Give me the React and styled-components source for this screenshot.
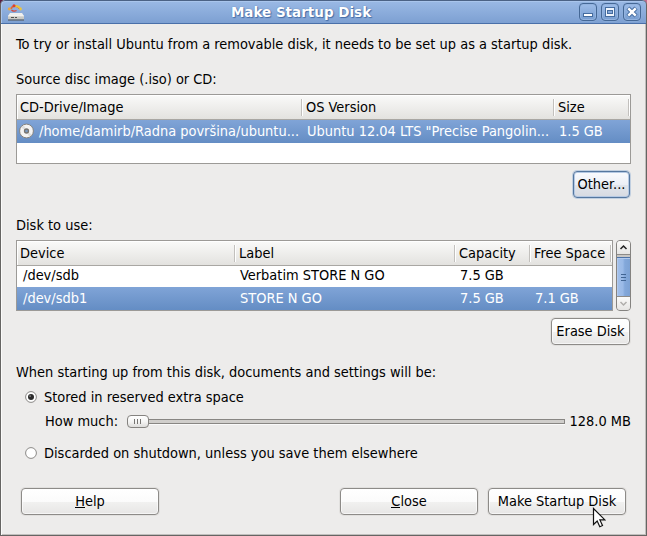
import React from "react";
import styled, { createGlobalStyle, css } from "styled-components";

const Global = createGlobalStyle`
  * { box-sizing: border-box; }
  html, body { margin: 0; padding: 0; overflow: hidden; }
  body {
    width: 647px;
    height: 536px;
    background: linear-gradient(90deg, #5c1f45 50%, #c06a90 50%);
    font-family: "DejaVu Sans Condensed", "DejaVu Sans", sans-serif;
    font-stretch: condensed;
    font-size: 14.45px;
    color: #000;
    cursor: default;
  }
`;

const Window = styled.main`
  position: relative;
  width: 647px;
  height: 536px;
  display: flex;
  flex-direction: column;
  border: 1px solid #666563;
  border-top: 0;
  border-radius: 5px 5px 0 0;
  background: #edeceb;
  box-shadow: inset 1px 0 #fbfbfa, inset -1px -1px #c1bfbd;
  overflow: hidden;
`;

const TitleBar = styled.header`
  height: 24px;
  flex: none;
  margin: 0 -1px;
  padding: 0 5px 0 6px;
  display: grid;
  grid-template-columns: 30px 1fr 76px;
  align-items: center;
  border: 1px solid #4b6285;
  border-bottom-color: #4a70a9;
  border-radius: 5px 5px 0 0;
  background: linear-gradient(#9ab9e5, #7da0d2);
  box-shadow: inset 1px 1px #a9c5ec;
`;

const Title = styled.h1`
  margin: 0;
  text-align: center;
  font-family: "DejaVu Sans", sans-serif;
  font-stretch: normal;
  font-size: 13.5px;
  line-height: 22px;
  font-weight: bold;
  color: #fff;
  text-shadow: 0 0 1px #456da6, 1px 1px 1px #456da6;
`;

const WindowControls = styled.div`
  display: flex;
  justify-content: flex-end;
  gap: 4px;
`;

const ControlButton = styled.button`
  width: 18px;
  height: 18px;
  padding: 0;
  display: grid;
  place-items: center;
  border: 1px solid #456896;
  border-radius: 4px;
  background: linear-gradient(#9dbce8, #779dd0);
  box-shadow: inset 0 0 0 1px #93b3df, 0 0 0 0.5px #8eafdc;
  svg { display: block; }
`;

const Body = styled.div`
  padding: 12px 15px 0;
  display: flex;
  flex-direction: column;
`;

const Line = styled.div`
  height: 16px;
  line-height: 16px;
  white-space: nowrap;
  margin: ${(p) => p.$top || 0}px 0 ${(p) => p.$bottom || 0}px;
`;

const TableRow = styled.div`
  display: grid;
`;

const Table = styled.div`
  height: ${(p) => p.$height}px;
  flex: none;
  width: ${(p) => p.$width}px;
  border: 1px solid #9c9a97;
  background: #fff;
  overflow: hidden;
  ${TableRow} { grid-template-columns: ${(p) => p.$columns}; }
`;

const HeadRow = styled(TableRow)`
  height: 25px;
  padding: 4px 0 3px;
  border-bottom: 1px solid #a9a7a3;
  background: linear-gradient(#fafaf9, #e3e2df);
  box-shadow: inset 1px 1px #fff;
`;

const HeadCell = styled.div`
  padding-left: 3px;
  line-height: 16px;
  white-space: nowrap;
  border-right: 1px solid #c2c0bd;
  box-shadow: 1px 0 #fff;
  & + & { padding-left: 4px; }
`;

const DataRow = styled(TableRow)`
  height: ${(p) => p.$height || 23}px;
  line-height: ${(p) => p.$line || 22}px;
  align-items: start;
  ${(p) =>
    p.$selected &&
    css`
      color: #fff;
      background: linear-gradient(#80a4d7, #648dc4);
    `}
`;

const Cell = styled.div`
  display: flex;
  align-items: center;
  gap: 5px;
  padding-left: ${(p) => p.$pad ?? 5}px;
  white-space: nowrap;
  svg { flex: none; }
`;

const Button = styled.button`
  width: ${(p) => p.$width}px;
  height: 27px;
  padding: 0 0 1px;
  font: inherit;
  line-height: 16px;
  color: #000;
  white-space: nowrap;
  border: 1px solid #8d8b88;
  border-radius: 4px;
  background: linear-gradient(#ffffff, #fbfbfb 50%, #f1f1f0 52%, #e7e6e5);
  box-shadow: inset 0 0 0 1px rgba(255, 255, 255, 0.6), 0 0 0 1px rgba(190, 188, 185, 0.25);
  ${(p) =>
    p.$focused &&
    css`
      border-color: #55779f;
      background: linear-gradient(#fafbfe, #eceff6 50%, #e1e5ec 52%, #d7dae1);
      box-shadow: inset 0 0 0 1px #b5c9e4, 0 0 0 1px rgba(150, 178, 214, 0.5);
    `}
`;

const Accel = styled.span`
  border-bottom: 1px solid #000;
  display: inline-block;
  height: 15px;
`;

const RightAligned = styled.div`
  display: flex;
  justify-content: flex-end;
  margin: 7px 1px 0 0;
`;

const DiskArea = styled.div`
  display: flex;
  gap: 3px;
`;

const ScrollBar = styled.div`
  width: 15px;
  height: 71px;
  display: flex;
  flex-direction: column;
  border: 1px solid #858380;
  border-radius: 4px;
  background: #c9c7c4;
  overflow: hidden;
`;

const ScrollStep = styled.div`
  height: 14px;
  flex: none;
  display: grid;
  place-items: center;
  background: linear-gradient(#fbfbfa, #e6e5e3);
  ${(p) => (p.$down ? "border-top" : "border-bottom")}: 1px solid #8d8b88;
`;

const ScrollThumb = styled.div`
  height: 39px;
  flex: none;
  margin: 2px -1px 0;
  display: grid;
  place-items: center;
  border: 1px solid #4e73a6;
  border-bottom: 0;
  background: linear-gradient(90deg, #a3c0ea, #9abae7 45%, #83a8da 60%, #7da2d4);
  box-shadow: inset 1px 1px #b2caee;
`;

const Option = styled.label`
  height: 16px;
  display: flex;
  align-items: center;
  margin: ${(p) => p.$top}px 0 0 9px;
  gap: 7px;
  line-height: 16px;
  white-space: nowrap;
`;

const SizeRow = styled.div`
  display: flex;
  align-items: center;
  height: 16px;
  margin: 8px 0 0 29px;
  line-height: 16px;
  white-space: nowrap;
`;

const SizeLabel = styled.span`
  width: 82px;
`;

const SliderTrack = styled.div`
  width: 417px;
  height: 5px;
  flex: none;
  margin: 0 5px 0 20px;
  border: 1px solid #888683;
  border-left: 0;
  background: #d0cecb;
  box-shadow: 0 1px #fafafa;
`;

const SliderThumb = styled.div`
  width: 22px;
  height: 13px;
  flex: none;
  margin-right: -21px;
  z-index: 1;
  display: flex;
  align-items: center;
  justify-content: center;
  gap: 2px;
  border: 1px solid #858380;
  border-radius: 4px;
  background: linear-gradient(#fff, #f5f5f4 50%, #dedddb);
`;

const Grip = styled.i`
  width: 1px;
  height: 5px;
  background: #777572;
`;

const Actions = styled.footer`
  display: flex;
  margin: 27px 0 0 5px;
  gap: 10px;
  ${Button}:first-child { margin-right: 171px; }
`;

const Pointer = styled.svg`
  position: absolute;
  left: 591px;
  top: 507px;
`;

function DiskIcon() {
  return (
    <svg width="18" height="18" viewBox="0 0 18 18" aria-hidden="true">
      <path d="M4 6C5 2.5 10 2 13 6" fill="none" stroke="#df6b3a" strokeWidth="1.8" />
      <path d="M8 3.2q3-.6 5 2" fill="none" stroke="#eac63a" strokeWidth="2" />
      <circle cx="2.3" cy="6" r="1.4" fill="#f0a63c" />
      <circle cx="7" cy="2.8" r="1.5" fill="#db3f32" />
      <circle cx="13.5" cy="6" r="1.4" fill="#ecc540" />
      <path d="M4.5 7q2 2 5 .5" fill="none" stroke="#d84234" strokeWidth="1.3" />
      <path d="M3 10h12l2 3H1z" fill="#efefed" />
      <path d="M1 13h16v3.5H1z" fill="#c9c9c5" />
      <path d="M1 17h16M4 14.5h3m1 0h2" stroke="#4e504e" />
      <path d="M1 13h16" stroke="#f9f9f8" strokeWidth=".6" />
    </svg>
  );
}

function DiscIcon() {
  return (
    <svg width="15" height="16" viewBox="0 0 15 16" aria-hidden="true">
      <circle cx="7.5" cy="8" r="6.9" fill="#f4f4f3" stroke="#85827e" />
      <path d="M7.5 8 2 4.5A6 6 0 0 1 5 2.2zM7.5 8l5.5 3.5a6 6 0 0 1-3 2.3z" fill="#dededc" />
      <circle cx="7.5" cy="8" r="2" fill="#7898c0" stroke="#77746f" strokeWidth="1.3" />
    </svg>
  );
}

function Radio({ checked }) {
  return (
    <svg width="12" height="12" viewBox="0 0 12 12" aria-hidden="true">
      <circle cx="6" cy="6" r="5.4" fill="#fff" stroke="#8b8987" />
      {checked && <circle cx="6" cy="6" r="3" fill="#2b2b2b" />}
      {checked && <circle cx="5.1" cy="5.1" r="0.9" fill="#8a8a8a" />}
    </svg>
  );
}

function Arrow({ down }) {
  return (
    <svg width="9" height="7" viewBox="0 0 9 7" aria-hidden="true">
      <path d={down ? "M1.5 2l3 3 3-3" : "M1.5 5l3-3 3 3"} fill="none" stroke={down ? "#b0aeab" : "#222"} strokeWidth="1.5" />
    </svg>
  );
}

export default function App() {
  return (
    <>
      <Global />
      <Window>
        <TitleBar>
          <DiskIcon />
          <Title>Make Startup Disk</Title>
          <WindowControls>
            <ControlButton aria-label="Minimize">
              <svg width="12" height="12" viewBox="0 0 12 12">
                <rect x="1.5" y="7.5" width="9" height="3" fill="#fff" stroke="#456c9f" />
              </svg>
            </ControlButton>
            <ControlButton aria-label="Maximize">
              <svg width="12" height="12" viewBox="0 0 12 12">
                <rect x="1.5" y="1.5" width="9" height="9" fill="#eef4fc" stroke="#456c9f" />
                <rect x="3.5" y="4.5" width="5" height="3" fill="#84a8da" stroke="#456c9f" />
              </svg>
            </ControlButton>
            <ControlButton aria-label="Close window">
              <svg width="12" height="12" viewBox="0 0 12 12">
                <path d="M2 2l8 8M10 2l-8 8" stroke="#456c9f" strokeWidth="4.4" />
                <path d="M2.3 2.3l7.4 7.4M9.7 2.3l-7.4 7.4" stroke="#fff" strokeWidth="2.4" />
              </svg>
            </ControlButton>
          </WindowControls>
        </TitleBar>
        <Body>
          <Line>To try or install Ubuntu from a removable disk, it needs to be set up as a startup disk.</Line>
          <Line $top={19} $bottom={7}>Source disc image (.iso) or CD:</Line>
          <Table $width={615} $height={70} $columns="285px 252px 75px 1px">
            <HeadRow>
              <HeadCell>CD-Drive/Image</HeadCell>
              <HeadCell>OS Version</HeadCell>
              <HeadCell>Size</HeadCell>
            </HeadRow>
            <DataRow $selected>
              <Cell $pad={2}>
                <DiscIcon />
                /home/damirb/Radna površina/ubuntu...
              </Cell>
              <Cell>Ubuntu 12.04 LTS "Precise Pangolin...</Cell>
              <Cell>1.5 GB</Cell>
            </DataRow>
          </Table>
          <RightAligned>
            <Button $width={57} $focused>Other...</Button>
          </RightAligned>
          <Line $top={19} $bottom={7}>Disk to use:</Line>
          <DiskArea>
            <Table $width={597} $height={71} $columns="218px 220px 75px 81px 1px">
              <HeadRow>
                <HeadCell>Device</HeadCell>
                <HeadCell>Label</HeadCell>
                <HeadCell>Capacity</HeadCell>
                <HeadCell>Free Space</HeadCell>
              </HeadRow>
              <DataRow $height={21} $line={18}>
                <Cell $pad={6}>/dev/sdb</Cell>
                <Cell>Verbatim STORE N GO</Cell>
                <Cell>7.5 GB</Cell>
              </DataRow>
              <DataRow $selected>
                <Cell $pad={6}>/dev/sdb1</Cell>
                <Cell>STORE N GO</Cell>
                <Cell>7.5 GB</Cell>
                <Cell>7.1 GB</Cell>
              </DataRow>
            </Table>
            <ScrollBar>
              <ScrollStep><Arrow /></ScrollStep>
              <ScrollThumb>
                <svg width="5" height="7" viewBox="0 0 5 7">
                  <path d="M0 .5h5M0 3.5h5M0 6.5h5" stroke="#416593" />
                </svg>
              </ScrollThumb>
              <ScrollStep $down><Arrow down /></ScrollStep>
            </ScrollBar>
          </DiskArea>
          <RightAligned>
            <Button $width={79}>Erase Disk</Button>
          </RightAligned>
          <Line $top={19}>When starting up from this disk, documents and settings will be:</Line>
          <Option $top={9}>
            <Radio checked />
            Stored in reserved extra space
          </Option>
          <SizeRow>
            <SizeLabel>How much:</SizeLabel>
            <SliderThumb><Grip /><Grip /><Grip /></SliderThumb>
            <SliderTrack />
            <span>128.0 MB</span>
          </SizeRow>
          <Option $top={16}>
            <Radio />
            Discarded on shutdown, unless you save them elsewhere
          </Option>
          <Actions>
            <Button $width={138}><Accel>H</Accel>elp</Button>
            <Button $width={138}><Accel>C</Accel>lose</Button>
            <Button $width={138}>Make Startup Disk</Button>
          </Actions>
        </Body>
        <Pointer width="14" height="21" viewBox="0 0 14 21" aria-hidden="true">
          <path d="M1.5 1.5v16l3.7-3.5 2.6 5.7 2.7-1.2-2.6-5.6h5z" fill="#fff" stroke="#111" strokeWidth="1.2" />
        </Pointer>
      </Window>
    </>
  );
}
